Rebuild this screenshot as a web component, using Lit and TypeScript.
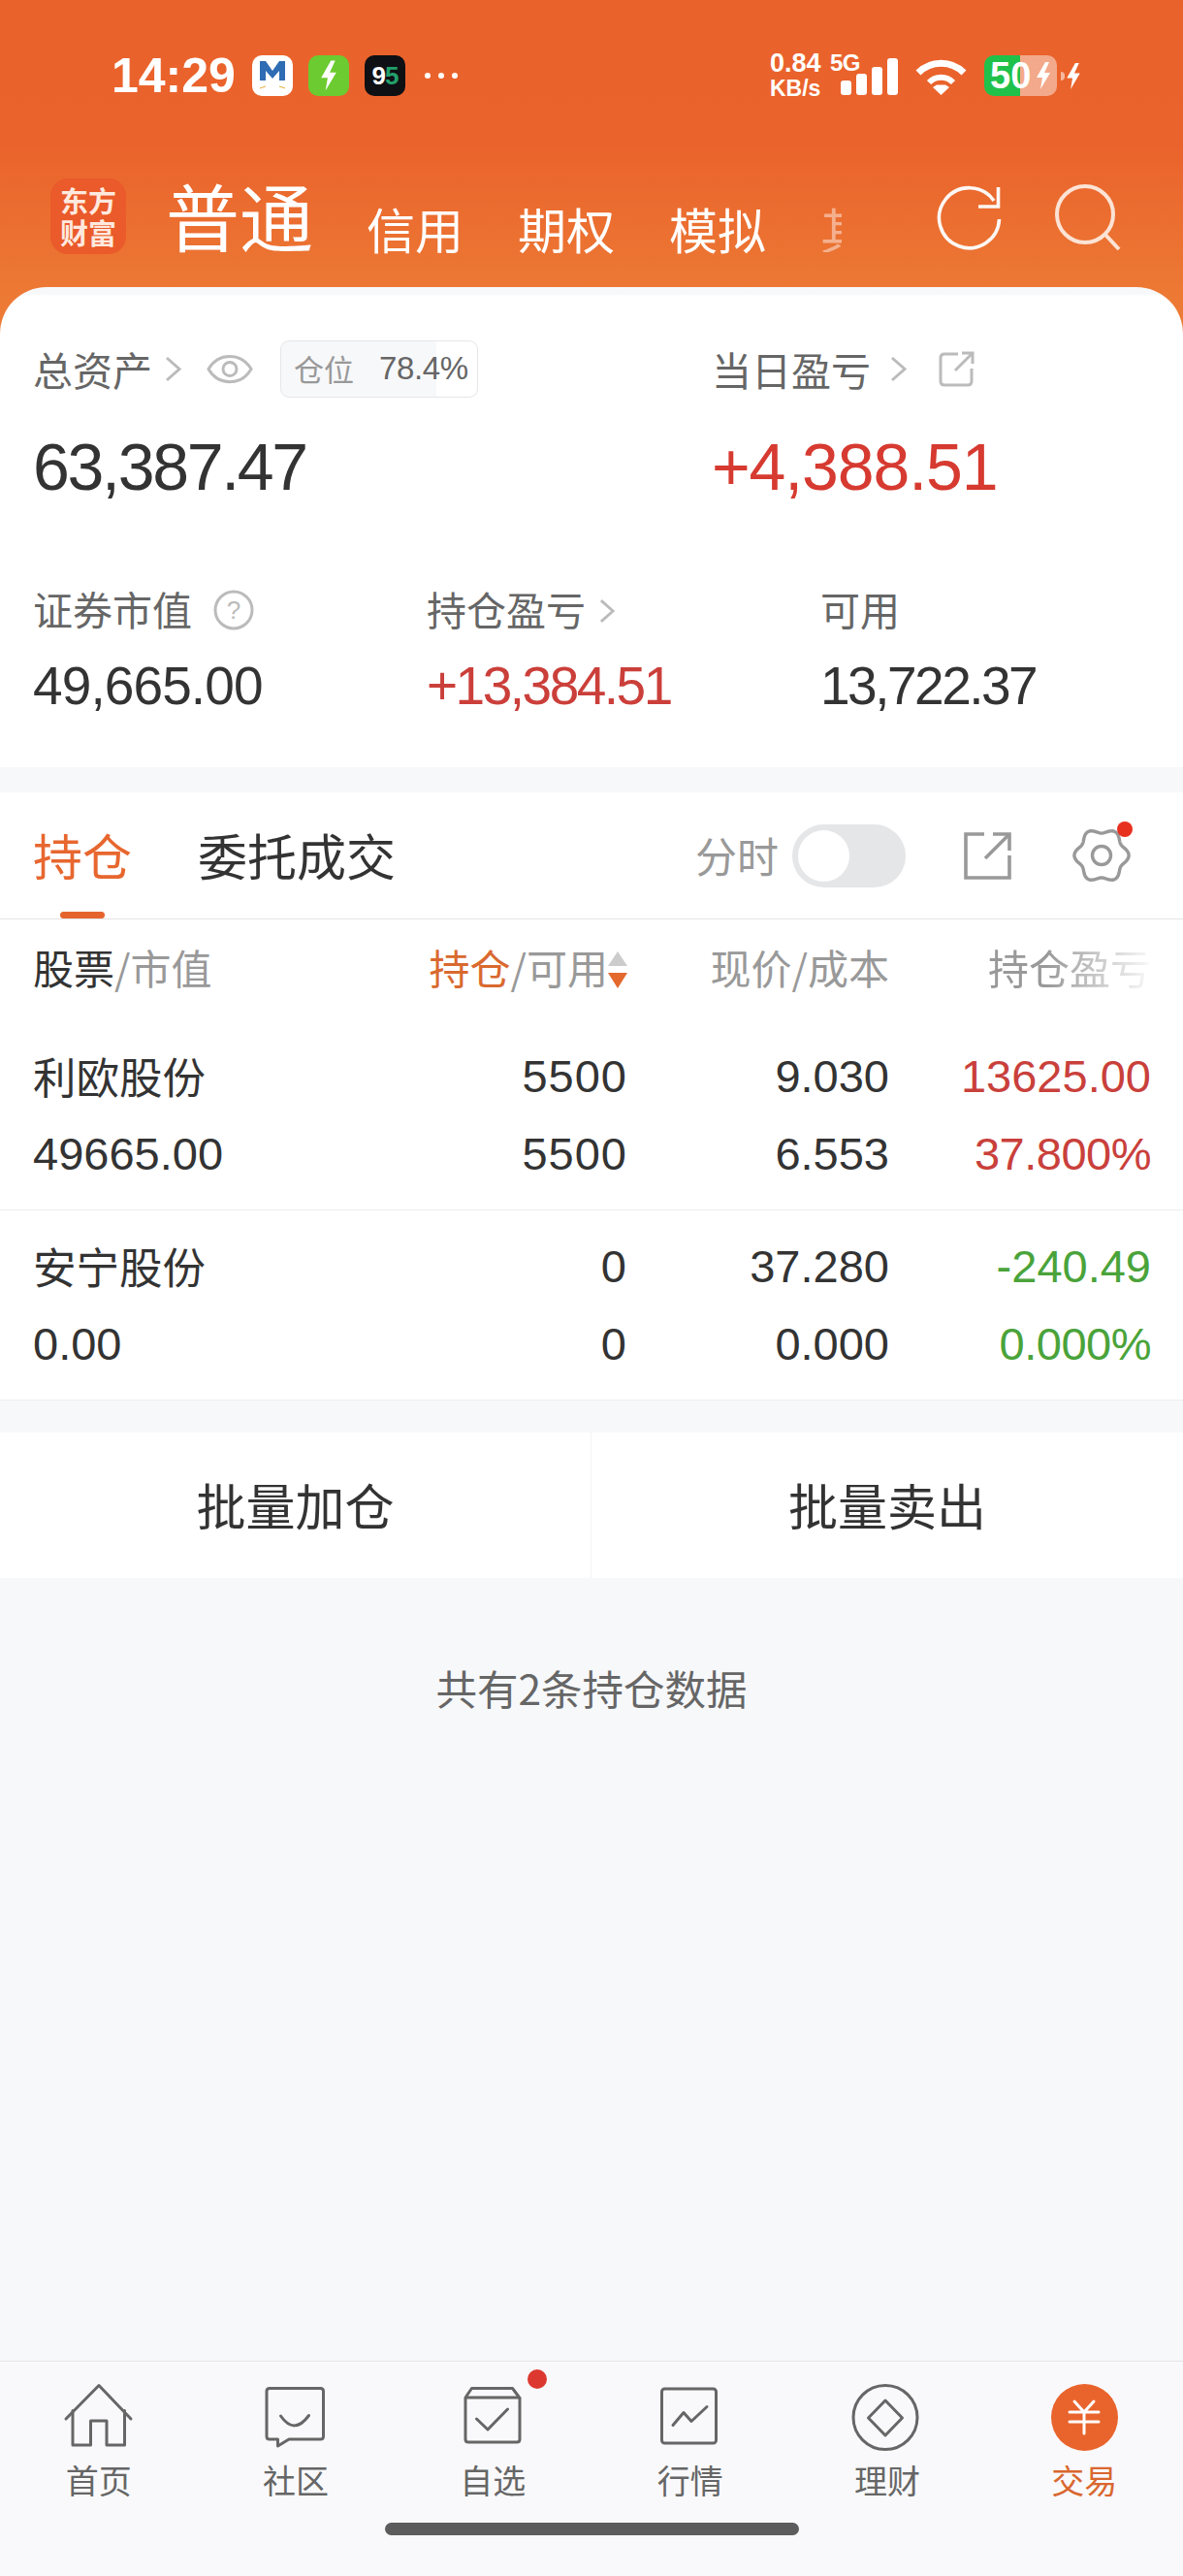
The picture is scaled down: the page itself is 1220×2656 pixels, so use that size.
import { LitElement, html, css, svg } from "lit";
import { customElement } from "lit/decorators.js";

const gearPath = () => {
  const pts: string[] = [];
  for (let i = 0; i < 180; i++) {
    const t = (i / 180) * Math.PI * 2;
    const r = 25.5 + 2.6 * Math.cos(6 * t);
    pts.push(`${(30 + r * Math.cos(t)).toFixed(2)},${(30 + r * Math.sin(t)).toFixed(2)}`);
  }
  return pts.join(" ");
};

const chevron = (w = 17, h = 27) => html`<svg class="chev" width=${w} height=${h} viewBox="0 0 17 27"><polyline points="2,2 15,13.5 2,25" fill="none" stroke="#bbb" stroke-width="3"/></svg>`;

const bolt = (w: number, h: number, c = "#fff") => html`<svg width=${w} height=${h} viewBox="0 0 18 28"><polygon points="11,0 2,16 8,16 6,28 16,11 10,11 15,0" fill=${c}/></svg>`;

const holdings = [
  { name: "利欧股份", mv: "49665.00", a: "5500", b: "5500", c: "9.030", d: "6.553", e: "13625.00", f: "37.800%", tone: "up" },
  { name: "安宁股份", mv: "0.00", a: "0", b: "0", c: "37.280", d: "0.000", e: "-240.49", f: "0.000%", tone: "down" },
];

const navIcons = [
  { label: "首页", icon: svg`<path d="M1 36 L35 1.5 L68 36"/><path d="M8 27.5 V63 H26.5 V38 H43 V63 H61.5 V27.5"/>` },
  { label: "社区", icon: svg`<g transform="translate(3.5 3)"><path d="M4 1.5 H57 Q60 1.5 60 4.5 V51 Q60 54 57 54 H24.5 L13 61 V54 H4.5 Q1.5 54 1.5 51 V4.5 Q1.5 1.5 4.5 1.5 Z"/><path d="M16 30 Q30 50 45 29.5"/></g>` },
  { label: "自选", icon: svg`<g transform="translate(4.5 3)"><path d="M2.5 9.5 L8 1.5 H50 L56 9.5"/><path d="M1.5 11 H57.5 V54 Q57.5 57 54.5 57 H4.5 Q1.5 57 1.5 54 Z"/><polyline points="13,33 24.5,44 45,23"/></g>` },
  { label: "行情", icon: svg`<g transform="translate(4 3.5)"><rect x="1.5" y="1.5" width="56" height="56" rx="3"/><polyline points="13,39 24,26 32,35 48,20"/></g>` },
  { label: "理财", icon: svg`<g transform="translate(-1.5 0)"><circle cx="34.5" cy="34.5" r="33"/><path d="M34.5 17 L52 35 L34.5 53 L17 35 Z"/></g>` },
];

@customElement("app-root")
export class AppRoot extends LitElement {
  static styles = css`
    :host { display: block; width: 1220px; height: 2656px; background: #f7f8fa; overflow: hidden;
      font-family: "Noto Sans CJK SC", "Liberation Sans", sans-serif; color: #333; }
    * { box-sizing: border-box; }
    svg { display: block; flex: none; overflow: visible; }
    .num { font-family: "Liberation Sans", "Noto Sans CJK SC", sans-serif; }

    .top { background: linear-gradient(180deg, #ea622b 0, #ea632c 150px, #ec7834 296px, #ee7c36 350px) no-repeat; background-size: 100% 350px; }
    .status { height: 156px; padding: 0 104px 0 115px; display: flex; align-items: center; justify-content: space-between; color: #fff; }
    .st-left, .st-right { display: flex; align-items: center; }
    .time { font: bold 50px/60px "Liberation Sans", sans-serif; width: 145px; color: #fff; }
    .app { width: 42px; height: 42px; border-radius: 10px; display: flex; align-items: center; justify-content: center; margin-right: 16px; overflow: hidden; }
    .app.m { background: #fff; }
    .app.g { background: #6bcb30; }
    .app.k { background: #0e1014; font: bold 26px/42px "Liberation Sans", sans-serif; color: #fff; letter-spacing: -1px; }
    .app.k b { color: #22a06b; }
    .dots { display: flex; gap: 8px; margin-left: 4px; }
    .dots i { width: 6px; height: 6px; border-radius: 50%; background: #fff; display: block; }
    .speed { width: 62px; font: bold 27px/26px "Liberation Sans", sans-serif; display: flex; flex-direction: column; }
    .speed small { font-size: 23px; }
    .sig { width: 70px; position: relative; height: 40px; }
    .g5 { position: absolute; left: 0; top: -6px; font: bold 24px/26px "Liberation Sans", sans-serif; letter-spacing: -.5px; }
    .bars { position: absolute; left: 11px; bottom: 0; display: flex; align-items: flex-end; gap: 5.5px; }
    .bars i { display: block; width: 10.5px; border-radius: 3px; background: #fff; }
    .b1 { height: 15px; } .b2 { height: 22px; } .b3 { height: 29px; } .b4 { height: 38px; }
    .wifi { margin: 0 18px 0 18px; }
    .batt { width: 75px; height: 42px; border-radius: 10px; background: linear-gradient(90deg, #1fc14b 37px, rgba(255,255,255,.45) 37px);
      display: flex; align-items: center; padding-left: 6px; gap: 4px; font: bold 38px/42px "Liberation Sans", sans-serif; color: #fff; }
    .tick { width: 4px; height: 9px; margin-left: 4px; background: rgba(255,255,255,.55); border-radius: 0 4px 4px 0; }

    .nav { height: 140px; padding: 28px 64px 34px 52px; display: flex; align-items: flex-end; color: #fff; }
    .logo { width: 78px; height: 78px; border-radius: 18px; background: #ea5a2a; display: flex; align-items: center; justify-content: center;
      font-size: 29px; line-height: 33px; font-weight: 700; color: #ffe9df; white-space: pre-line; text-align: center; }
    .main { font-size: 76px; line-height: 76px; margin: 0 55px 3px 41px; }
    .sub { font-size: 50px; line-height: 50px; margin: 0 56px 2px 0; color: #fff; white-space: nowrap; }
    .sub.fade { margin: 0 0 2px 0; opacity: .45; -webkit-mask-image: linear-gradient(90deg, #000 22px, transparent 22px); mask-image: linear-gradient(90deg, #000 22px, transparent 22px); }
    .nav-icons { margin-left: auto; display: flex; gap: 55px; align-self: flex-end; margin-bottom: 4px; }

    .assets { background: linear-gradient(180deg, #f7f8fa 0, #f7f8fa 7px, #fff 9px); border-radius: 48px 48px 0 0; padding: 54px 0 49px 34px; }
    .g1 { display: grid; grid-template-columns: 700px 1fr; }
    .g2 { display: grid; grid-template-columns: 406px 406px 1fr; margin-top: 83px; }
    .lab { display: flex; align-items: center; font-size: 41px; line-height: 60px; height: 60px; color: #666; }
    .g2 .lab { height: 50px; line-height: 46px; padding-bottom: 4px; }
    .chev { margin-left: 13px; }
    .g1 > div:nth-child(2) .chev { margin-left: 20px; }
    .g2 .chev { margin-left: 14px; margin-top: 6px; }
    .eye { margin: 0 28px 0 26px; }
    .pos { width: 204px; height: 59px; border: 1px solid #e6e6ea; border-radius: 9px; display: flex; align-items: center; padding-left: 13px;
      background: linear-gradient(90deg, #f7f8fa 160px, #fff 160px); }
    .pos .p1 { font-size: 31px; color: #999; width: 88px; }
    .pos .p2 { font: 33px "Liberation Sans", sans-serif; color: #666; letter-spacing: -.4px; }
    .ext { margin-left: 33px; }
    .big { font: 68px/80px "Liberation Sans", sans-serif; margin-top: 31px; letter-spacing: -2.3px; color: #333; }
    .big.red { letter-spacing: -1.1px; }
    .mid { font: 55px/70px "Liberation Sans", sans-serif; margin-top: 18px; letter-spacing: -.9px; color: #333; }
    .mid.t { letter-spacing: -2.5px; }
    .red { color: #d63a30; }
    .mid.red { color: #cb3f3a; }
    .q { margin: 4px 0 0 22px; }

    .band { height: 26px; }
    .tabs { position: relative; height: 131px; background: #fff; border-bottom: 1px solid #e4e4e6; padding: 0 54px 0 34px; display: flex; align-items: center; }
    .tab { font-size: 51px; line-height: 60px; margin-right: 68px; color: #333; padding-bottom: 2px; }
    .tab.on { color: #e7672f; }
    .ind { position: absolute; left: 62px; bottom: 0; width: 46px; height: 7px; border-radius: 4px; background: #e5642e; }
    .tools { margin-left: auto; display: flex; align-items: center; }
    .ft { font-size: 43px; line-height: 60px; color: #999; margin-right: 14px; padding-bottom: 2px; }
    .tog { width: 117px; height: 65px; border-radius: 33px; background: #e5e6e8; padding: 6px; margin-right: 60px; }
    .tog i { display: block; width: 53px; height: 53px; border-radius: 50%; background: #fff; }
    .gear { position: relative; margin-left: 63px; width: 60px; height: 60px; }
    .gear i { position: absolute; right: -2px; top: -5px; width: 16px; height: 16px; border-radius: 50%; background: #e8301f; }

    .table { background: #fff; }
    .grid { display: grid; grid-template-columns: 301px 311px 271px 270px; padding: 0 33px 0 34px; }
    .thead { height: 104px; align-items: center; font-size: 42px; line-height: 50px; color: #999; padding-bottom: 6px; }
    .thead > div { display: flex; align-items: center; justify-content: flex-end; white-space: pre; }
    .thead > div:first-child { justify-content: flex-start; }
    .dark { color: #333; }
    .act { color: #d9692f; }
    .arrows { margin: 6px -1px 0 0; }
    .fade-r { -webkit-mask-image: linear-gradient(90deg, #000 60%, rgba(0,0,0,.05) 100%); mask-image: linear-gradient(90deg, #000 60%, rgba(0,0,0,.05) 100%); }
    .row { padding-top: 18px; padding-bottom: 17px; border-bottom: 1px solid #eceef0; grid-auto-rows: 80px; align-items: center; font: 47px/80px "Liberation Sans", "Noto Sans CJK SC", sans-serif; color: #333; }
    .row > div { text-align: right; }
    .row > .l { text-align: left; }
    .row > div:nth-child(4n+2) { letter-spacing: 1px; margin-right: -1px; }
    .row > div:nth-child(8) { letter-spacing: -.5px; }
    .row .cn { font-family: "Noto Sans CJK SC", sans-serif; font-size: 44.5px; line-height: 74px; padding-bottom: 3px; }
    .row .up { color: #c9403b; }
    .row .down { color: #4aa33a; }

    .actions { margin-top: 33px; height: 150px; background: #fff; display: grid; grid-template-columns: 1fr 1fr; }
    .actions div { display: flex; align-items: center; justify-content: center; font-size: 51px; color: #333; padding-bottom: 2px; }
    .actions div:first-child { border-right: 1px solid #f3f3f5; }
    .note { height: 228px; display: flex; align-items: center; justify-content: center; font-size: 42.5px; color: #666; padding-bottom: 4px; }
    .spacer { height: 579px; }

    .tabbar { height: 222px; background: #f9f9fb; border-top: 1px solid #e4e5e8; }
    .items { display: grid; grid-template-columns: repeat(6, 1fr); padding-top: 22px; }
    .item { position: relative; display: flex; flex-direction: column; align-items: center; font-size: 34px; line-height: 40px; color: #666; }
    .ico { height: 70px; display: flex; align-items: center; justify-content: center; margin-bottom: 10px; }
    .ico svg { fill: none; stroke: #666; stroke-width: 3; stroke-linejoin: round; stroke-linecap: round; }
    .item.on { color: #d9672f; }
    .yuan { width: 69px; height: 69px; border-radius: 50%; background: #e9642d; display: flex; align-items: center; justify-content: center; }
    .ico .yuan svg { stroke: #fff; }
    .badge { position: absolute; left: 137px; top: -14px; width: 20px; height: 20px; border-radius: 50%; background: #dd382f; }
    .home { width: 427px; height: 13px; margin: 24px auto 0; border-radius: 7px; background: #5c5c5c; }
  `;

  render() {
    return html`
      <div class="top">
        <div class="status">
          <div class="st-left">
            <div class="time">14:29</div>
            <div class="app m">
              <svg width="32" height="34" viewBox="0 0 32 34">
                <polygon points="3,2 9,2 16,12 23,2 29,2 29,22 23,22 23,12 16,20 9,12 9,22 3,22" fill="#2e6cb4"/>
                <path d="M3 30 L9 28 M29 30 L23 28" stroke="#e8b64a" stroke-width="1.2"/>
              </svg>
            </div>
            <div class="app g">${bolt(20, 32)}</div>
            <div class="app k">9<b>5</b></div>
            <div class="dots"><i></i><i></i><i></i></div>
          </div>
          <div class="st-right">
            <div class="speed num"><span>0.84</span><small>KB/s</small></div>
            <div class="sig">
              <span class="g5">5G</span>
              <div class="bars"><i class="b1"></i><i class="b2"></i><i class="b3"></i><i class="b4"></i></div>
            </div>
            <svg class="wifi" width="53" height="39" viewBox="0 0 53 39">
              <path d="M3 16 C16 3 37 3 50 16" fill="none" stroke="#fff" stroke-width="7"/>
              <path d="M14 26 C21 19 32 19 39 26" fill="none" stroke="#fff" stroke-width="6"/>
              <polygon points="26.5,39 18,31 22,28.5 31,28.5 35,31" fill="#fff"/>
            </svg>
            <div class="batt"><span>50</span>${bolt(18, 28)}</div>
            <div class="tick"></div>
            <div>${bolt(18, 27)}</div>
          </div>
        </div>
        <div class="nav">
          <div class="logo">${"东方\n财富"}</div>
          <div class="main">普通</div>
          <div class="sub">信用</div>
          <div class="sub">期权</div>
          <div class="sub">模拟</div>
          <div class="sub fade">其他</div>
          <div class="nav-icons">
            <svg width="68" height="68" viewBox="0 0 68 68" fill="none" stroke="#fff" stroke-width="3.6" opacity=".95">
              <path d="M60 17 A31 31 0 1 0 65.5 36"/>
              <polyline points="44,23 64.5,23 64.5,3"/>
            </svg>
            <svg width="68" height="68" viewBox="0 0 68 68" fill="none" stroke="#fce3d5" stroke-width="4">
              <circle cx="31" cy="31" r="29"/>
              <line x1="52" y1="52" x2="66" y2="67"/>
            </svg>
          </div>
        </div>

        <div class="assets">
          <div class="g1">
            <div>
              <div class="lab">总资产${chevron()}
                <svg class="eye" width="48" height="33" viewBox="0 0 48 33" fill="none" stroke="#bbb" stroke-width="3"><path d="M2 16.5 C12 -1 36 -1 46 16.5 C36 34 12 34 2 16.5 Z"/><circle cx="24" cy="16.5" r="7"/></svg>
                <div class="pos"><span class="p1">仓位</span><span class="p2">78.4%</span></div>
              </div>
              <div class="big">63,387.47</div>
            </div>
            <div>
              <div class="lab">当日盈亏${chevron()}
                <svg class="ext" width="37" height="37" viewBox="0 0 37 37" fill="none" stroke="#bbb" stroke-width="3"><path d="M20 3 H6 Q2 3 2 7 V31 Q2 35 6 35 H30 Q34 35 34 31 V18"/><polyline points="24,2 35,2 35,13"/><line x1="35" y1="2" x2="17" y2="20"/></svg>
              </div>
              <div class="big red">+4,388.51</div>
            </div>
          </div>
          <div class="g2">
            <div>
              <div class="lab">证券市值
                <svg class="q" width="42" height="42" viewBox="0 0 42 42"><circle cx="21" cy="21" r="19" fill="none" stroke="#bbb" stroke-width="3"/><text x="21" y="30" text-anchor="middle" font-family="Liberation Sans" font-size="26" fill="#bbb">?</text></svg>
              </div>
              <div class="mid">49,665.00</div>
            </div>
            <div>
              <div class="lab">持仓盈亏${chevron(16, 26)}</div>
              <div class="mid red t">+13,384.51</div>
            </div>
            <div>
              <div class="lab">可用</div>
              <div class="mid t">13,722.37</div>
            </div>
          </div>
        </div>
      </div>

      <div class="band"></div>
      <div class="tabs">
        <div class="tab on">持仓</div>
        <div class="tab">委托成交</div>
        <div class="ind"></div>
        <div class="tools">
          <span class="ft">分时</span>
          <div class="tog"><i></i></div>
          <svg width="49" height="49" viewBox="0 0 49 49" fill="none" stroke="#999" stroke-width="3.6"><polyline points="21,2 2,2 2,47 47,47 47,24"/><polyline points="30,2 47,2 47,19"/><line x1="47" y1="2" x2="22" y2="27"/></svg>
          <div class="gear">
            <svg width="60" height="60" viewBox="0 0 60 60" fill="none" stroke="#999" stroke-width="3.4"><polygon points=${gearPath()} stroke-linejoin="round"/><circle cx="30" cy="30" r="9.5"/></svg>
            <i></i>
          </div>
        </div>
      </div>

      <div class="table">
        <div class="grid thead">
          <div><span class="dark">股票</span>/市值</div>
          <div><span class="act">持仓</span>/可用<svg class="arrows" width="20" height="38" viewBox="0 0 20 38"><polygon points="10,0 20,15 0,15" fill="#ccc"/><polygon points="0,22 20,22 10,38" fill="#e4692e"/></svg></div>
          <div>现价/成本</div>
          <div class="fade-r">持仓盈亏</div>
        </div>
        ${holdings.map((h) => html`
          <div class="grid row">
            <div class="l cn">${h.name}</div><div>${h.a}</div><div>${h.c}</div><div class=${h.tone}>${h.e}</div>
            <div class="l">${h.mv}</div><div>${h.b}</div><div>${h.d}</div><div class=${h.tone}>${h.f}</div>
          </div>`)}
      </div>

      <div class="actions"><div>批量加仓</div><div>批量卖出</div></div>
      <div class="note">共有2条持仓数据</div>
      <div class="spacer"></div>

      <div class="tabbar">
        <div class="items">
          ${navIcons.map((n, i) => html`
            <div class="item">
              <div class="ico"><svg width="69" height="69" viewBox="0 0 69 69">${n.icon}</svg></div>
              <span>${n.label}</span>
              ${i === 2 ? html`<div class="badge"></div>` : ""}
            </div>`)}
          <div class="item on">
            <div class="ico"><div class="yuan"><svg width="30" height="34" viewBox="0 0 30 34"><path d="M5 1 L15 12 L25 1 M0 12 H30 M0 22 H30 M15 12 V34" stroke-width="3"/></svg></div></div>
            <span>交易</span>
          </div>
        </div>
        <div class="home"></div>
      </div>
    `;
  }
}
